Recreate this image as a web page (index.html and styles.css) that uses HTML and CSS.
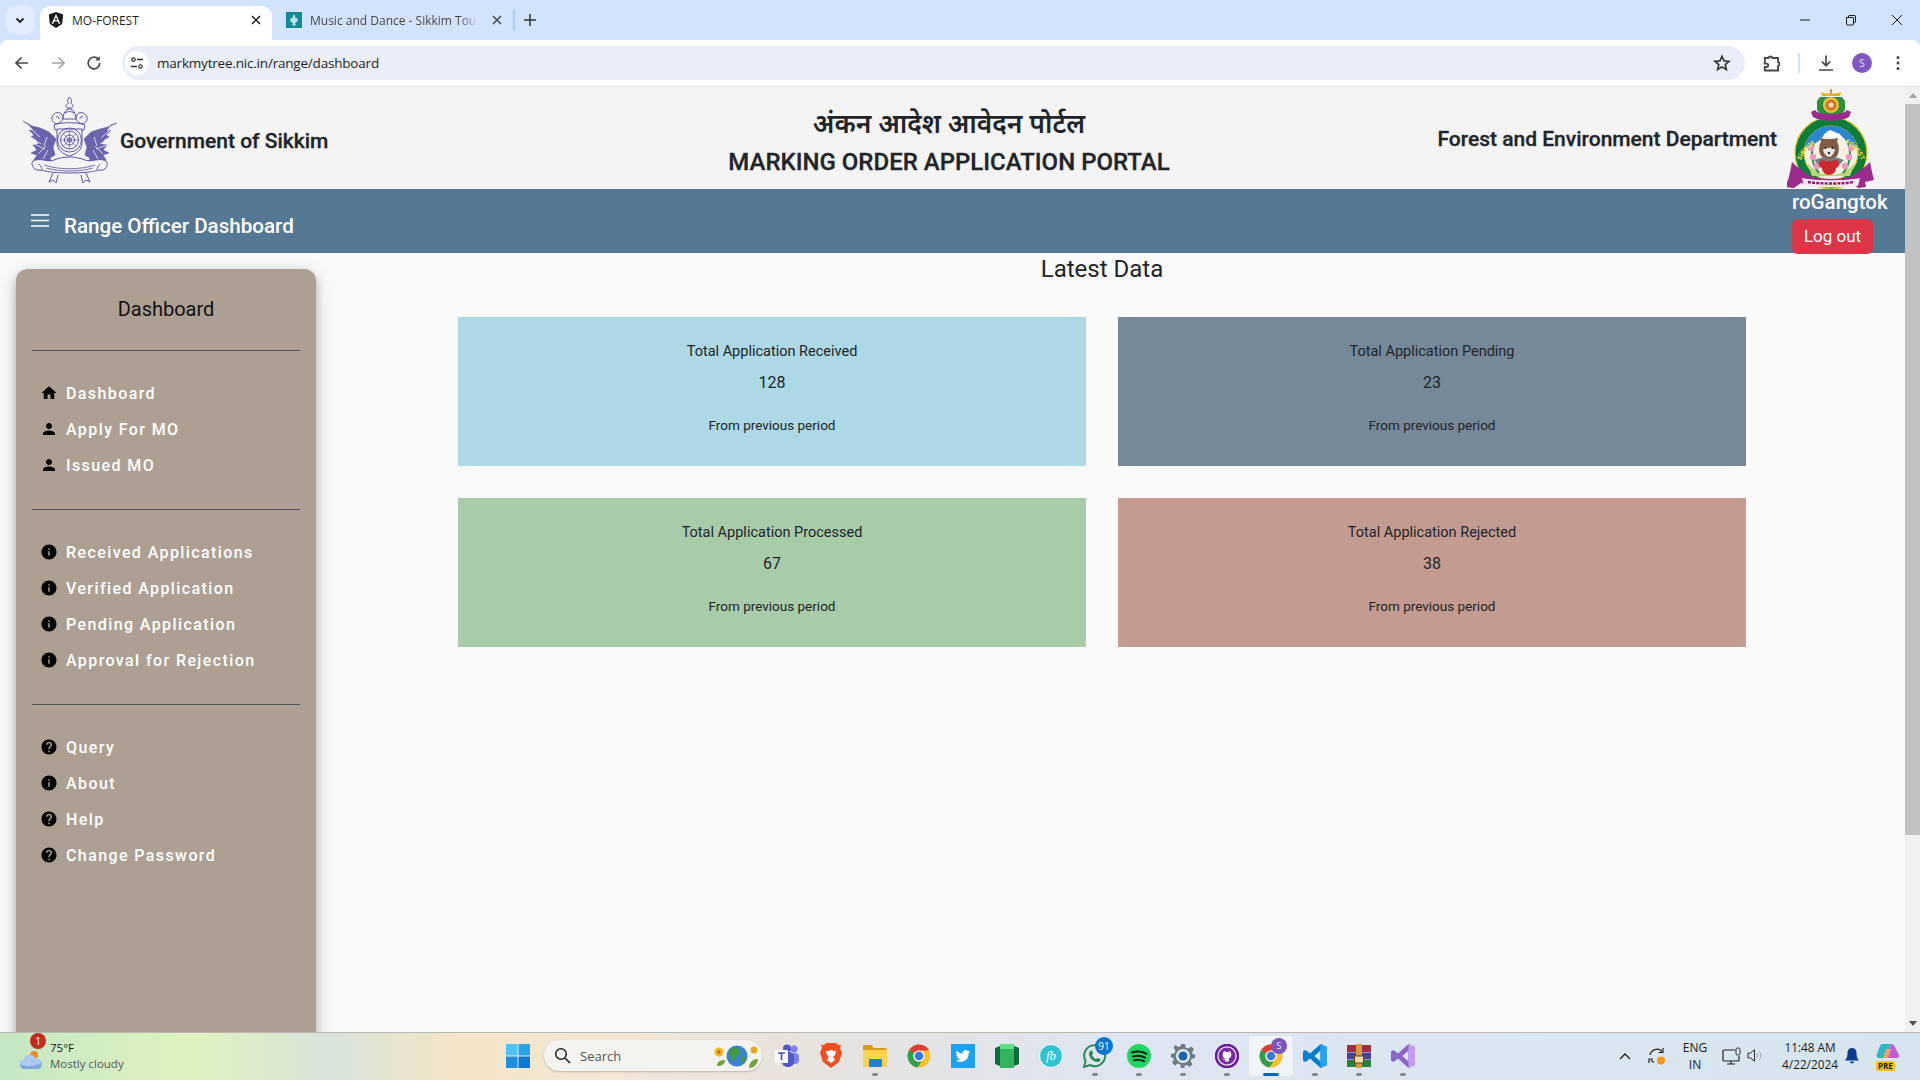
FILE: index.html
```html
<!DOCTYPE html>
<html lang="en">
<head>
<meta charset="utf-8">
<title>MO-FOREST</title>
<link rel="stylesheet" href="styles.css">
</head>
<body>
<svg class="defs" width="0" height="0" aria-hidden="true">
  <symbol id="i-home" viewBox="0 0 24 24"><path d="M10 20v-6h4v6h5v-8h3L12 3 2 12h3v8z"/></symbol>
  <symbol id="i-person" viewBox="0 0 24 24"><path d="M12 12c2.21 0 4-1.79 4-4s-1.79-4-4-4-4 1.79-4 4 1.79 4 4 4zm0 2c-2.67 0-8 1.34-8 4v2h16v-2c0-2.66-5.33-4-8-4z"/></symbol>
  <symbol id="i-info" viewBox="0 0 24 24"><path d="M12 2C6.48 2 2 6.48 2 12s4.48 10 10 10 10-4.48 10-10S17.52 2 12 2zm1 15h-2v-6h2v6zm0-8h-2V7h2v2z"/></symbol>
  <symbol id="i-help" viewBox="0 0 24 24"><path d="M12 2C6.48 2 2 6.48 2 12s4.48 10 10 10 10-4.48 10-10S17.52 2 12 2zm1 17h-2v-2h2v2zm2.07-7.75l-.9.92C13.45 12.9 13 13.5 13 15h-2v-.5c0-1.1.45-2.1 1.17-2.83l1.24-1.26c.37-.36.59-.86.59-1.41 0-1.1-.9-2-2-2s-2 .9-2 2H8c0-2.21 1.79-4 4-4s4 1.79 4 4c0 .88-.36 1.68-.93 2.25z"/></symbol>
  <symbol id="i-chrome" viewBox="0 0 24 24">
    <circle cx="12" cy="12" r="11.5" fill="#fbc02d"/>
    <path fill="#de3e33" d="M12 .5a11.5 11.5 0 0 1 10 5.9H12a5.6 5.6 0 0 0-5.3 3.7L2.4 5.7A11.5 11.5 0 0 1 12 .5z"/>
    <path fill="#2f9e4f" d="M2.4 5.700A11.500 11.500 0 0 0 10.500 23.400L15 16.900a5.600 5.600 0 0 1-8.300-6.800z"/>
    <circle cx="12" cy="12" r="5.600" fill="#fff"/><circle cx="12" cy="12" r="4.400" fill="#3b78e7"/>
  </symbol>
</svg>

<div class="tabstrip">
  <button class="tab-list"><svg width="12" height="12" viewBox="0 0 12 12"><path d="M2.500 4.500 6 8l3.500-3.500" fill="none" stroke="#1f1f1f" stroke-width="1.800"/></svg></button>
  <div class="tab tab-active">
    <svg class="favicon" viewBox="0 0 16 16"><path d="M8 0 .8 2.600l1.100 9.500L8 16l6.100-3.900 1.100-9.500z" fill="#1b1b1f"/><path d="M8 2 3.600 11.800h1.700l.9-2.200h3.600l.9 2.200h1.700zm-1.300 6.200L8 5.100l1.300 3.100z" fill="#fff"/></svg>
    <span class="tab-title">MO-FOREST</span>
    <svg class="tab-close" viewBox="0 0 16 16"><path d="m4 4 8 8m0-8-8 8" stroke="#1f1f1f" stroke-width="1.500"/></svg>
  </div>
  <div class="tab">
    <svg class="favicon" viewBox="0 0 16 16"><rect width="16" height="16" fill="#108a96"/><path d="M8 2.500c1.400 1 1.400 2.400.8 3.300 1.800-.2 3 .9 3 2.200 0 1.900-1.800 2.600-2.900 3.100l1 2.400H6.100l1-2.400C6 10.600 4.200 9.900 4.200 8c0-1.300 1.200-2.400 3-2.200-.6-.9-.6-2.300.8-3.300z" fill="#bfe6e4"/></svg>
    <span class="tab-title tab-fade">Music and Dance - Sikkim Tour</span>
    <svg class="tab-close" viewBox="0 0 16 16"><path d="m4 4 8 8m0-8-8 8" stroke="#474747" stroke-width="1.500"/></svg>
  </div>
  <span class="tab-sep"></span>
  <button class="tab-new"><svg width="14" height="14" viewBox="0 0 14 14"><path d="M7 1v12M1 7h12" stroke="#333" stroke-width="1.500"/></svg></button>
  <div class="win-controls">
    <span class="win-btn"><svg width="12" height="12" viewBox="0 0 12 12"><path d="M1 6h10" stroke="#1a1a1a"/></svg></span>
    <span class="win-btn"><svg width="12" height="12" viewBox="0 0 12 12"><path d="M1.500 3.500h6.500a.8.8 0 0 1 .5.5v6.500a.8.8 0 0 1-.5.5H2a.8.8 0 0 1-.5-.5zM3.500 3.500V2a.8.8 0 0 1 .5-.5h6a.8.8 0 0 1 .5.5v6a.8.8 0 0 1-.5.5H8.500" fill="none" stroke="#1a1a1a"/></svg></span>
    <span class="win-btn"><svg width="12" height="12" viewBox="0 0 12 12"><path d="m1 1 10 10M11 1 1 11" stroke="#1a1a1a"/></svg></span>
  </div>
</div>

<div class="toolbar">
  <span class="tool"><svg width="18" height="18" viewBox="0 0 18 18"><path d="M15 9H3.500M8.500 3.500 3 9l5.500 5.500" fill="none" stroke="#474747" stroke-width="1.700"/></svg></span>
  <span class="tool"><svg width="18" height="18" viewBox="0 0 18 18"><path d="M3 9h11.500M9.500 3.500 15 9l-5.500 5.500" fill="none" stroke="#a3a3a3" stroke-width="1.700"/></svg></span>
  <span class="tool"><svg width="18" height="18" viewBox="0 0 18 18"><path d="M14.800 9a5.800 5.800 0 1 1-1.700-4.100" fill="none" stroke="#474747" stroke-width="1.700"/><path d="M14.800 2v4.500h-4.500z" fill="#474747"/></svg></span>
  <div class="omnibox">
    <span class="site-icon"><svg width="14" height="14" viewBox="0 0 14 14"><circle cx="3.500" cy="3.500" r="1.700" fill="none" stroke="#333" stroke-width="1.200"/><path d="M7 3.500h6M1 10.500h6" stroke="#333" stroke-width="1.300"/><circle cx="10.500" cy="10.500" r="1.700" fill="none" stroke="#333" stroke-width="1.200"/></svg></span>
    <span class="url">markmytree.nic.in/range/dashboard</span>
    <svg class="star" width="18" height="18" viewBox="0 0 18 18"><path d="m9 2.300 2 4.600 5 .4-3.800 3.300 1.200 4.900L9 12.900l-4.400 2.600 1.200-4.900L2 7.300l5-.4z" fill="none" stroke="#333" stroke-width="1.600"/></svg>
  </div>
  <span class="tool"><svg width="20" height="20" viewBox="0 0 18 18"><path d="M2.500 4.500h3.300a1.900 1.900 0 0 1 3.600 0h5.100v3.800a1.800 1.800 0 0 1 0 3.400v4h-12v-3.100h1.600a1.500 1.500 0 0 0 0-3H2.500z" fill="none" stroke="#474747" stroke-width="1.700"/></svg></span>
  <span class="tool-sep"></span>
  <span class="tool"><svg width="18" height="18" viewBox="0 0 18 18"><path d="M9 1.500v10M4.800 7.500 9 11.700l4.200-4.200M2 16h14" fill="none" stroke="#474747" stroke-width="1.700"/></svg></span>
  <span class="tool"><span class="avatar">S</span></span>
  <span class="tool"><svg width="18" height="18" viewBox="0 0 18 18"><circle cx="9" cy="3.500" r="1.500" fill="#474747"/><circle cx="9" cy="9" r="1.500" fill="#474747"/><circle cx="9" cy="14.500" r="1.500" fill="#474747"/></svg></span>
</div>

<div class="viewport">
  <div class="app">
    <header class="brand">
      <div class="brand-left">
        <svg class="emblem-state" viewBox="0 0 95 86">
          <g fill="#514aa0" stroke="#514aa0" stroke-width=".5">
            <path d="m0 24 9 5 8 2 9 4 7 7-3 8 2 8-5 3 2 6-5-1-5 3-2-5-6-1 3-5-6-2 6-3-4-5 6-1-4-5-4-2 3-2-5-5 5 1-5-6z" fill-opacity=".85"/>
            <path d="m94 26-9 4-8 2-9 3-7 7 3 8-2 8 5 3-2 6 5-1 5 3 2-5 6-1-3-5 6-2-6-3 4-5-6-1 4-5 4-2-3-2 5-5-5 1 5-6z" fill-opacity=".85"/>
          </g>
          <g fill="none" stroke="#f4f4f4" stroke-width=".8">
            <path d="m7 31 10 9M6 39l12 8M11 47l11 5M15 57l8-8M20 62l5-9M24 40l-3 9M88 32l-10 9M89 40l-12 7M84 48l-11 4M80 57l-8-8M75 62l-5-9M71 40l3 9"/>
          </g>
          <g fill="none" stroke="#564ca3" stroke-width=".95">
            <path d="M46.500 0c-2.500 3-2.500 4.500-1 6-3 1.500-3 4-1 5h4c2-1 2-3.500-1-5 1.500-1.500 1.500-3-1-6z"/>
            <path d="M40 22c0-6 3-10 6.500-10s6.500 4 6.500 10z"/>
            <path d="M42 16c3-2 6-2 9 0"/>
            <path d="M29 20c2-5 8-6 10-2 2 3 0 7-3 8-3 2-8-1-7-6zM33 20c2-1 3 0 3 2M64 20c-2-5-8-6-10-2-2 3 0 7 3 8 3 2 8-1 7-6zM60 20c-2-1-3 0-3 2"/>
            <path d="M31 28c6-3 25-3 31 0l-1 5H32z"/>
            <path d="M34 32v14c0 7 6 11 12.500 13C53 57 59 53 59 46V32z" fill="#f4f4f4"/>
            <circle cx="46.500" cy="43" r="12"/><circle cx="46.500" cy="43" r="9"/><circle cx="46.500" cy="43" r="5"/><circle cx="46.500" cy="43" r="2"/>
            <path d="M46.500 34v18M37.500 43h18M40 36.500l13 13M53 36.500l-13 13" stroke-width=".6"/>
            <path d="M10 64c8-4 15 2 21-1 10-4 21-4 31 0 6 3 13-3 21 1 3 3 0 9-4 9-6 0-9 3-32 3s-26-3-32-3c-4 0-8-6-5-9z" fill="#f4f4f4"/>
            <path d="M21 68c16 5 35 5 51 0M23 71c15 4 33 4 47 0" stroke-width=".8"/>
            <path d="M16 67c2 2 3 4 3 6M77 67c-2 2-3 4-3 6"/>
            <path d="m30 76-4 9 4-2 3 3 2-8M63 76l4 9-4-2-3 3-2-8"/>
          </g>
        </svg>
        <span class="brand-state">Government of Sikkim</span>
      </div>
      <div class="brand-title">
        <div class="title-hi">अंकन आदेश आवेदन पोर्टल</div>
        <div class="title-en">MARKING ORDER APPLICATION PORTAL</div>
      </div>
      <div class="brand-right">
        <span class="brand-dept">Forest and Environment Department</span>
        <svg class="emblem-dept" viewBox="0 0 88 101">
          <path d="M44 0l1.500 3h-3zM34 4c3 2 17 2 20 0l-1 4H35z" fill="#e8b21f"/>
          <path d="M44 2v4" stroke="#b5372a"/>
          <path d="M33 9h22l3 4v9l-3 4-5 1-6 3-6-3-5-1-3-4v-9z" fill="#2c8f3e"/>
          <circle cx="44" cy="17" r="8" fill="#e9c13a"/><circle cx="44" cy="17" r="5.500" fill="#d9722a"/><circle cx="44" cy="17" r="2.500" fill="#f6e4a8"/>
          <circle cx="44" cy="65" r="36" fill="#0f7d3a" stroke="#e3c62c" stroke-width="1.200"/>
          <path d="M24 24l4-2 2 2c9 3 19 3 28 0l2-2 4 2-2 5c-9 5-27 5-36 0z" fill="#9a2a8c"/>
          <circle cx="44" cy="65" r="27" fill="#f4f1e3" stroke="#e3c62c"/>
          <path d="M17.400 60a27 27 0 0 1 53.200 0c-6-2-11-6-14-10l-5-5-5 3-6-5-6 7c-4 5-10 8-17.200 10z" fill="#2a86cf"/>
          <path d="M36 47l7-5 7 3 5 5-11-1z" fill="#fff"/>
          <path d="M20 74c11 17 37 17 48 0l-5 14H25z" fill="#b9d77a"/>
          <path d="M27 55c-4 10-2 22 5 30M61 55c4 10 2 22-5 30" fill="none" stroke="#3b8f47" stroke-width="2"/>
          <g fill="#e79ac3"><circle cx="24" cy="60" r="3.200"/><circle cx="26" cy="69" r="3.200"/><circle cx="30" cy="78" r="3.200"/><circle cx="64" cy="60" r="3.200"/><circle cx="62" cy="69" r="3.200"/><circle cx="58" cy="78" r="3.200"/></g>
          <path d="M33 66c-2-6 0-11 1-12l-1-4 5 1h8l5-1-1 4c1 1 3 6 1 12-1 3-5 5-9 5s-8-2-9-5z" fill="#7f5a46"/>
          <path d="M36 62c2-3 4-2 6-2s4-1 6 2c-1 4-4 7-6 7s-5-3-6-7z" fill="#ece5dc"/>
          <circle cx="38.500" cy="60" r="1.100" fill="#222"/><circle cx="45.500" cy="60" r="1.100" fill="#222"/><circle cx="42" cy="65" r="1.200" fill="#222"/>
          <path d="M27 72l10-3 5 2 6-2 9 3-5 5H32z" fill="#6f7f86"/>
          <circle cx="42" cy="80" r="7" fill="#d0282f"/><circle cx="36" cy="76" r="4" fill="#d0282f"/><circle cx="48" cy="76" r="4" fill="#d0282f"/>
          <path id="ring2" d="M13.500 74a32 32 0 0 1 61 0" fill="none"/>
          <text class="emblem-text"><textPath href="#ring2" startOffset="2%">SIKKIM</textPath></text>
          <text class="emblem-text"><textPath href="#ring2" startOffset="68%">FOREST</textPath></text>
          <path d="M1 92c2-7 3-13 4-18 3 3 6 6 10 8 5 6 13 9 29 9s24-3 29-9c4-2 7-5 10-8 1 5 2 11 4 18l-9 2 1 5-8 1-7-5c-8 3-42 3-50 0l-7 5-8-1 1-5z" fill="#9c2b8e"/>
          <path d="M15 90c12 3 46 3 58 0l-2 8c-12 2-42 2-54 0z" fill="#f7e7f4"/>
          <path d="M21 94c12 2 34 2 46 0" stroke="#7c1f70" stroke-width="2.400" stroke-dasharray="3 1.200" fill="none"/>
        </svg>
      </div>
    </header>

    <nav class="topbar">
      <button class="menu-btn"><svg width="18" height="14" viewBox="0 0 18 14"><path d="M0 1h18M0 6.500h18M0 12h18" stroke="#fff" stroke-width="1.600"/></svg></button>
      <span class="topbar-title">Range Officer Dashboard</span>
      <div class="user">
        <span class="user-name">roGangtok</span>
        <button class="logout">Log out</button>
      </div>
    </nav>

    <div class="body-row">
      <aside class="sidebar">
        <h3 class="side-head">Dashboard</h3>
        <hr class="side-rule">
        <ul class="side-group">
          <li class="side-item"><svg class="side-icon"><use href="#i-home"/></svg>Dashboard</li>
          <li class="side-item"><svg class="side-icon"><use href="#i-person"/></svg>Apply For MO</li>
          <li class="side-item"><svg class="side-icon"><use href="#i-person"/></svg>Issued MO</li>
        </ul>
        <hr class="side-rule">
        <ul class="side-group">
          <li class="side-item"><svg class="side-icon"><use href="#i-info"/></svg>Received Applications</li>
          <li class="side-item"><svg class="side-icon"><use href="#i-info"/></svg>Verified Application</li>
          <li class="side-item"><svg class="side-icon"><use href="#i-info"/></svg>Pending Application</li>
          <li class="side-item"><svg class="side-icon"><use href="#i-info"/></svg>Approval for Rejection</li>
        </ul>
        <hr class="side-rule">
        <ul class="side-group">
          <li class="side-item"><svg class="side-icon"><use href="#i-help"/></svg>Query</li>
          <li class="side-item"><svg class="side-icon"><use href="#i-info"/></svg>About</li>
          <li class="side-item"><svg class="side-icon"><use href="#i-help"/></svg>Help</li>
          <li class="side-item"><svg class="side-icon"><use href="#i-help"/></svg>Change Password</li>
        </ul>
      </aside>
      <main class="content">
        <h2 class="content-head">Latest Data</h2>
        <div class="cards">
          <section class="card card-blue"><div class="card-label">Total Application Received</div><div class="card-num">128</div><div class="card-foot">From previous period</div></section>
          <section class="card card-slate"><div class="card-label">Total Application Pending</div><div class="card-num">23</div><div class="card-foot">From previous period</div></section>
          <section class="card card-green"><div class="card-label">Total Application Processed</div><div class="card-num">67</div><div class="card-foot">From previous period</div></section>
          <section class="card card-rose"><div class="card-label">Total Application Rejected</div><div class="card-num">38</div><div class="card-foot">From previous period</div></section>
        </div>
      </main>
    </div>
  </div>
  <div class="scrollbar">
    <span class="sb-arrow"><i class="tri-up"></i></span>
    <span class="sb-thumb"></span>
    <span class="sb-arrow sb-end"><i class="tri-down"></i></span>
  </div>
</div>

<footer class="taskbar">
  <div class="tb-weather">
    <span class="wx-icon">
      <svg width="26" height="22" viewBox="0 0 26 22"><circle cx="16" cy="6" r="4" fill="#f08a24"/><path d="M6 20a4.500 4.500 0 0 1-.5-9 6.500 6.500 0 0 1 12.300-1.500A5.300 5.300 0 0 1 20 20z" fill="#a9c9ee"/><path d="M2 15c6 3 14 3 21-1l1 2c-1 3-3 4-4 4H6c-2 0-4-2-4-5z" fill="#7fa9dd"/></svg>
      <span class="wx-badge">1</span>
    </span>
    <span class="wx-text"><span class="wx-temp">75°F</span><span class="wx-desc">Mostly cloudy</span></span>
  </div>
  <span class="tb-slot"><svg width="24" height="24" viewBox="0 0 24 24"><path d="M0 0h11.500v11.500H0z" fill="#4fc3f7"/><path d="M12.500 0H24v11.500H12.500z" fill="#29a3e8"/><path d="M0 12.500h11.500V24H0z" fill="#1b8fde"/><path d="M12.500 12.500H24V24H12.500z" fill="#0b78d1"/></svg></span>
  <div class="tb-search">
    <svg width="17" height="17" viewBox="0 0 17 17"><circle cx="7" cy="7" r="5.300" fill="none" stroke="#222" stroke-width="1.500"/><path d="m11 11 5 5" stroke="#222" stroke-width="1.700"/></svg>
    <span class="tb-search-text">Search</span>
    <svg class="tb-globe" width="46" height="26" viewBox="0 0 46 26"><circle cx="23" cy="13" r="10.500" fill="#3b82d0"/><path d="M18 5c4-1 8 1 8 4s-3 3-4 6-4 4-5 0-3-8 1-10zM28 14c3-1 4 1 3 4s-4 3-4 0z" fill="#3e9c3e"/><circle cx="5" cy="9" r="4.500" fill="#f1b91f"/><circle cx="5" cy="9" r="1.700" fill="#c96a10"/><path d="M3 23c0-4 3-6 8-6 0 4-3 6-8 6zM44 16c0 5-4 9-9 9 0-5 3-9 9-9z" fill="#6da63a"/><circle cx="40" cy="7" r="3.500" fill="#e9a81f"/></svg>
  </div>
  <span class="tb-slot"><svg width="26" height="24" viewBox="0 0 26 24"><circle cx="20" cy="5" r="3.500" fill="#7b83eb"/><rect x="14" y="9" width="11" height="11" rx="4" fill="#7b83eb"/><circle cx="13" cy="4.500" r="4" fill="#5059c9"/><rect x="8" y="8" width="12" height="15" rx="5" fill="#5059c9"/><rect x="1" y="6" width="13" height="13" rx="1" fill="#fff"/><path d="M4 9h7M7.500 9v7" stroke="#464eb8" stroke-width="1.700"/></svg></span>
  <span class="tb-slot"><svg width="22" height="25" viewBox="0 0 22 25"><path d="m6 0h10l2 2 3-.5L20 5l2 5-3 9-8 6-8-6-3-9 2-5L1 1.500 4 2z" fill="#f04e23"/><path d="M6 8c2 0 3 0 5-1 2 1 3 1 5 1l-1 4-2 2 2 3-4 3-4-3 2-3-2-2z" fill="#fff"/></svg></span>
  <span class="tb-slot tb-open"><svg width="24" height="22" viewBox="0 0 24 22"><path d="M0 1.500A1.500 1.500 0 0 1 1.500 0h7l2 3H22a2 2 0 0 1 2 2v15a2 2 0 0 1-2 2H2a2 2 0 0 1-2-2z" fill="#d99c1c"/><path d="M0 5h24v15a2 2 0 0 1-2 2H2a2 2 0 0 1-2-2z" fill="#fcd24f"/><rect x="6" y="14" width="13" height="8" rx="1" fill="#1f7fd0"/></svg></span>
  <span class="tb-slot"><svg class="tb-ic" viewBox="0 0 24 24"><use href="#i-chrome"/></svg></span>
  <span class="tb-slot"><svg width="24" height="24" viewBox="0 0 24 24"><rect width="24" height="24" fill="#1da1f2"/><path d="M19 7.500c-.5.300-1.100.4-1.700.5.600-.4 1-.9 1.300-1.600-.6.300-1.200.6-1.900.7a3 3 0 0 0-5.100 2.700A8.400 8.400 0 0 1 5.600 6.700a3 3 0 0 0 .9 3.900c-.5 0-.9-.1-1.300-.4 0 1.500 1 2.700 2.400 3a3 3 0 0 1-1.300 0c.4 1.200 1.500 2 2.800 2.100A6 6 0 0 1 4.700 16.500a8.400 8.400 0 0 0 13-7.500c.5-.4 1-.9 1.300-1.500z" fill="#fff"/></svg></span>
  <span class="tb-slot"><svg width="24" height="24" viewBox="0 0 24 24"><path d="M0 4 5 2v20l-5-2z" fill="#0f6b3a"/><path d="M24 4l-5-2v20l5-2z" fill="#0f6b3a"/><rect x="5" y="0" width="14" height="24" fill="#33b35b"/><rect x="5" y="0" width="14" height="5" fill="#5ee07f"/></svg></span>
  <span class="tb-slot"><span class="fb-badge">fb</span></span>
  <span class="tb-slot tb-open"><svg width="24" height="24" viewBox="0 0 24 24"><path d="M1 23l1.600-6A10.500 10.500 0 1 1 6.800 21z" fill="none" stroke="#2b8a5a" stroke-width="2"/><path d="M8.500 6.500c1 0 1.500 2.500 1.500 3s-1 1-1 1.500c1 2 2 3 4 4 .5 0 1-1 1.500-1s3 1 3 1.500c0 2-2 2.500-3 2.500-4 0-8.500-4-8.500-8.500 0-1 1-3 2.500-3z" fill="#2b8a5a"/></svg><span class="tb-count">91</span></span>
  <span class="tb-slot tb-open"><svg width="24" height="24" viewBox="0 0 24 24"><circle cx="12" cy="12" r="12" fill="#1ed760"/><path d="M5 8.500c5-1.500 10-1 14.500 1.300M6 12.500c4-1.200 8.500-.8 12 1.200M7 16.200c3.500-1 7-.6 10 1" fill="none" stroke="#0c1f12" stroke-width="2" stroke-linecap="round"/></svg></span>
  <span class="tb-slot tb-open"><svg width="24" height="24" viewBox="0 0 24 24"><path d="M10 0h4l.7 3.400 2.500 1 3-1.900 2.800 2.800-1.900 3 1 2.500L24 10v4l-3.400.7-1 2.500 1.900 3-2.800 2.800-3-1.900-2.500 1L14 24h-4l-.7-3.400-2.500-1-3 1.900-2.800-2.800 1.900-3-1-2.500L0 14v-4l3.400-.7 1-2.500-1.900-3L4.300 1l3 1.900 2.500-1z" fill="#6d7b87"/><circle cx="12" cy="12" r="7" fill="#e6ebf0"/><circle cx="12" cy="12" r="4.500" fill="#1566b0"/></svg></span>
  <span class="tb-slot tb-open"><svg width="24" height="24" viewBox="0 0 24 24"><circle cx="12" cy="12" r="11" fill="#f3e9f7" stroke="#6a1b9a" stroke-width="2.500"/><circle cx="12" cy="12" r="8.500" fill="#7b2aa0"/><path d="M8 9l1-2 2 1h2l2-1 1 2c1 3-.5 5-2.500 5.500.5.500.5 1 .5 3h-4v-1.500c-1.500 0-2-.5-2.500-1.500 1 .5 1.500.5 2.500.5v-.5C8.500 14 7 12 8 9z" fill="#fff"/></svg></span>
  <span class="tb-slot tb-active"><svg class="tb-ic" viewBox="0 0 24 24"><use href="#i-chrome"/></svg><span class="tb-profile">S</span></span>
  <span class="tb-slot tb-open"><svg width="24" height="24" viewBox="0 0 24 24"><path d="M17.500 0 24 3v18l-6.500 3L7 14.500 2.500 18 0 16.500V7.500L2.500 6 7 9.500zM17.500 6.500 11.500 12l6 5.500z" fill="#0a7fcb"/><path d="M17.500 0 24 3v18l-6.500 3z" fill="#25a5ef"/></svg></span>
  <span class="tb-slot tb-open"><svg width="24" height="24" viewBox="0 0 24 24"><rect x="0" y="1" width="24" height="7" fill="#a02c49"/><rect x="0" y="8.500" width="24" height="7" fill="#4a3f9c"/><rect x="0" y="16" width="24" height="7" fill="#2b7f3e"/><rect x="9" y="0" width="6" height="24" fill="#d99a3a"/><rect x="7.500" y="12" width="9" height="7" fill="#f2dca5" stroke="#6b4212"/></svg></span>
  <span class="tb-slot tb-open"><svg width="24" height="24" viewBox="0 0 24 24"><path d="M17.500 0 24 3v18l-6.500 3L7 14.500 2.500 18 0 16.500V7.500L2.500 6 7 9.500zM17.500 6.500 11.500 12l6 5.500z" fill="#8c63c6"/><path d="M17.500 0 24 3v18l-6.500 3z" fill="#c29ef0"/></svg></span>

  <div class="tray">
    <span class="tray-chev"><svg width="12" height="8" viewBox="0 0 12 8"><path d="m1 7 5-5 5 5" fill="none" stroke="#222" stroke-width="1.300"/></svg></span>
    <span class="tray-sync"><svg width="18" height="18" viewBox="0 0 18 18"><path d="M2 8a7 7 0 0 1 12-3.500M3 13a7 7 0 0 0 3 2.400" fill="none" stroke="#222" stroke-width="1.200"/><path d="M15 1v4.500h-4.500M1 16v-4h4" fill="none" stroke="#222" stroke-width="1.200"/><circle cx="13" cy="13.500" r="4" fill="#f59a1c"/></svg></span>
    <span class="tray-lang"><span>ENG</span><span>IN</span></span>
    <span class="tray-net"><svg width="20" height="18" viewBox="0 0 20 18"><path d="M13 3H2a1 1 0 0 0-1 1v9a1 1 0 0 0 1 1h14a1 1 0 0 0 1-1V9M5 17h8M9 14v3" fill="none" stroke="#222" stroke-width="1.200"/><rect x="14" y="1" width="4" height="7" rx="1.500" fill="none" stroke="#222"/></svg></span>
    <span class="tray-vol"><svg width="17" height="15" viewBox="0 0 17 15"><path d="M1 5h2.500L8 1.500v12L3.500 10H1z" fill="none" stroke="#222"/><path d="M10.500 5a3.500 3.500 0 0 1 0 5M13 3a7 7 0 0 1 0 9" fill="none" stroke="#9aa3aa"/></svg></span>
    <span class="tray-clock"><span>11:48 AM</span><span>4/22/2024</span></span>
    <span class="tray-bell"><svg width="14" height="16" viewBox="0 0 14 16"><path d="M7 0a4.500 4.500 0 0 1 4.500 4.500c0 4 .5 5.500 2.500 8H0c2-2.500 2.500-4 2.500-8A4.500 4.500 0 0 1 7 0zM5 13.500h4a2 2 0 0 1-4 0z" fill="#0b3d91"/></svg></span>
    <span class="tray-copilot">
      <svg width="24" height="20" viewBox="0 0 24 20"><path d="M6 1h9l-4 14H3c-2 0-3-2-2-4L4 3a3 3 0 0 1 2-2z" fill="#2fb6c9"/><path d="M15 1c2 0 3 1 4 3l4 8c1 2-1 3-3 3h-9z" fill="#c45bd6"/><path d="M7 15l3-9h5l-3 9z" fill="#f0a35c"/></svg>
      <span class="pre">PRE</span>
    </span>
  </div>
</footer>
</body>
</html>
```
FILE: styles.css
```css
* { box-sizing: border-box; }
html, body { margin: 0; height: 100%; overflow: hidden; }
body { display: flex; flex-direction: column; width: 1920px; height: 1080px; font-family: Roboto, "Noto Sans", sans-serif; background: #d3e3fd; }
.defs { position: absolute; }
button { border: 0; padding: 0; background: none; font: inherit; }
h2, h3, ul { margin: 0; padding: 0; font-weight: 400; }
ul { list-style: none; }

.tabstrip { height: 40px; flex: none; display: flex; align-items: flex-end; padding-left: 6px; font-family: "Open Sans", "Noto Sans", sans-serif; font-size: 12px; }
.tab-list { width: 28px; height: 28px; margin-bottom: 6px; border-radius: 8px; background: #e3ecfc; display: flex; align-items: center; justify-content: center; }
.tab { width: 232px; height: 34px; margin-left: 6px; padding: 0 8px 6px; display: flex; align-items: center; gap: 8px; color: #474747; }
.tab-active { background: #fff; border-radius: 10px 10px 0 0; color: #1f1f1f; }
.favicon { width: 16px; height: 16px; flex: none; }
.tab-title { flex: 1; white-space: nowrap; }
.tab-fade { -webkit-mask-image: linear-gradient(90deg, #000 150px, transparent 168px); mask-image: linear-gradient(90deg, #000 150px, transparent 168px); }
.tab-close { width: 16px; height: 16px; flex: none; }
.tab-sep { width: 2px; height: 20px; margin: 0 1px 10px 3px; background: #a8c7fa; }
.tab-new { width: 28px; height: 28px; margin-bottom: 6px; display: flex; align-items: center; justify-content: center; }
.win-controls { margin-left: auto; height: 40px; display: flex; }
.win-btn { width: 46px; display: flex; align-items: center; justify-content: center; }

.toolbar { height: 47px; flex: none; display: flex; align-items: center; padding: 0 4px 1px; background: #fff; border-bottom: 1px solid #e3e3e3; border-radius: 8px 8px 0 0; }
.tool { width: 36px; height: 36px; display: flex; align-items: center; justify-content: center; flex: none; }
.tool-sep { width: 18px; height: 20px; flex: none; background: linear-gradient(#d3e3fd, #d3e3fd) center / 2px 100% no-repeat; }
.omnibox { flex: 1; height: 34px; margin: 0 9px 0 10px; padding: 0 14px 0 3px; border-radius: 17px; background: #e9eef8; display: flex; align-items: center; }
.site-icon { width: 24px; height: 24px; border-radius: 50%; background: #fff; display: flex; align-items: center; justify-content: center; }
.url { margin-left: 8px; font: 13.500px "Open Sans", "Noto Sans", sans-serif; letter-spacing: -.2px; color: #1f1f1f; }
.star { margin-left: auto; }
.avatar { width: 20px; height: 20px; border-radius: 50%; background: #7e57c2; color: #e9e2f7; font: 10px/20px "Open Sans", sans-serif; text-align: center; }

.viewport { flex: 1; min-height: 0; display: flex; }
.app { flex: 1; min-width: 0; display: flex; flex-direction: column; background: #fafafa; overflow: hidden; }
.scrollbar { width: 15px; flex: none; display: flex; flex-direction: column; background: #f1f1f1; }
.sb-arrow { height: 17px; display: flex; align-items: center; justify-content: center; flex: none; }
.sb-end { margin-top: auto; }
.sb-thumb { height: 731px; background: #c1c1c1; flex: none; }
.tri-up, .tri-down { width: 0; height: 0; border-left: 4.500px solid transparent; border-right: 4.500px solid transparent; }
.tri-up { border-bottom: 5px solid #a3a3a3; }
.tri-down { border-top: 5px solid #505050; }

.brand { height: 102px; flex: none; display: grid; grid-template-columns: 500px 898px 1fr; align-items: center; background: #f4f4f4; color: #212529; }
.brand-left { display: flex; align-items: center; padding-left: 23px; }
.emblem-state { width: 95px; height: 86px; flex: none; margin-top: 4px; }
.brand-state { margin: 6px 0 0 2px; font-size: 21px; font-weight: 500; white-space: nowrap; -webkit-text-stroke: .3px #212529; }
.brand-title { text-align: center; font-weight: 500; padding-top: 7px; }
.title-hi { font-size: 26.400px; line-height: 36px; margin-top: -2px; font-family: "Noto Sans", Roboto, sans-serif; font-weight: 600; }
.title-en { font-size: 24px; line-height: 30px; margin-top: 6px; -webkit-text-stroke: .3px #212529; }
.brand-right { display: flex; align-items: flex-start; justify-content: flex-end; padding-right: 30px; height: 102px; }
.brand-dept { font-size: 21px; font-weight: 500; line-height: 24px; margin: 40px 10px 0 0; white-space: nowrap; -webkit-text-stroke: .3px #212529; }
.emblem-dept { width: 88px; height: 101px; flex: none; margin-top: 1px; }
.emblem-text { font: 700 6.500px Roboto, sans-serif; fill: #f4e04d; }

.topbar { height: 64px; flex: none; display: flex; align-items: flex-start; background: #557894; color: #fff; }
.menu-btn { margin: 25px 0 0 31px; width: 18px; height: 14px; display: block; line-height: 0; }
.topbar-title { margin: 25px 0 0 15px; font-size: 20.600px; line-height: 24px; font-weight: 500; }
.user { margin-left: auto; margin-right: 17px; width: 96px; display: flex; flex-direction: column; align-items: flex-start; }
.user-name { font-size: 20.500px; font-weight: 500; line-height: 24px; margin-top: 1px; }
.logout { width: 81px; height: 35px; margin: 5px 0 0; padding-bottom: 2px; border-radius: 6px; background: #dc3545; color: #fff; font: 400 17px Roboto, sans-serif; }

.body-row { flex: 1; min-height: 0; display: flex; align-items: flex-start; }
.sidebar { width: 300px; height: 800px; flex: none; margin: 16px 0 0 16px; padding: 28px 16px 0; border-radius: 12px; background: #ad9f92; box-shadow: 0 4px 8px rgba(0,0,0,.2), 0 6px 20px rgba(0,0,0,.19); }
.side-head { font-size: 20px; line-height: 24px; text-align: center; color: #111; margin-bottom: 29px; }
.side-rule { margin: 0; border: 0; height: 1px; background: #555260; }
.side-group { padding: 24px 0 26px; }
.side-item { height: 36px; display: flex; align-items: center; padding-left: 8px; color: #fff; font-size: 16px; font-weight: 500; letter-spacing: 1.400px; }
.side-icon { width: 18px; height: 18px; margin-right: 8px; fill: #000; flex: none; }

.content { flex: 1; min-width: 0; margin-right: 17px; display: flex; flex-direction: column; align-items: center; }
.content-head { font-size: 24px; line-height: 32px; color: #212529; }
.cards { margin-top: 32px; display: grid; grid-template-columns: 628px 628px; gap: 32px; }
.card { padding: 25px 0 32px; text-align: center; color: #212529; }
.card-label { font-size: 14.500px; line-height: 20px; }
.card-num { font-size: 16px; line-height: 24px; margin-top: 9px; }
.card-foot { font-size: 13.500px; line-height: 18px; margin-top: 21px; }
.card-blue { background: #add8e6; }
.card-slate { background: #778899; }
.card-green { background: #a8cca9; }
.card-rose { background: #c49b90; }

.taskbar { height: 48px; flex: none; display: flex; align-items: center; padding-bottom: 2px; border-top: 1px solid #b9b9b4; font-family: "Open Sans", "Noto Sans", sans-serif; color: #1c1c1c; background: linear-gradient(90deg, #c5e6c4 0, #dff3bf 10%, #d7e3da 17%, #f5e5c8 24%, #f2e6d6 32%, #e7e3de 42%, #dfe6f1 58%, #dbe6f1 75%, #d6e5ee 100%); }
.tb-weather { width: 496px; flex: none; padding-left: 18px; display: flex; align-items: center; gap: 6px; }
.wx-icon { position: relative; width: 26px; height: 22px; margin-top: 8px; }
.wx-badge { position: absolute; left: 12px; top: -16px; width: 16px; height: 16px; border-radius: 50%; background: #c42b1c; color: #fff; font-size: 10px; line-height: 16px; text-align: center; }
.wx-text { display: flex; flex-direction: column; font-size: 11.500px; line-height: 16px; }
.wx-desc { color: #555; }
.tb-slot { width: 44px; height: 40px; flex: none; position: relative; display: flex; align-items: center; justify-content: center; border-radius: 4px; }
.tb-ic { width: 24px; height: 24px; }
.tb-open::after, .tb-active::after { content: ""; position: absolute; left: 50%; bottom: 0; height: 3px; border-radius: 2px; }
.tb-open::after { width: 6px; margin-left: -3px; background: #85888c; }
.tb-active { background: rgba(255,255,255,.55); }
.tb-active::after { width: 16px; margin-left: -8px; background: #0067c0; }
.tb-search { width: 218px; height: 31px; flex: none; margin: 0 3px 0 4px; padding: 0 2px 0 10px; border-radius: 16px; background: #f5f3ef; box-shadow: 0 1px 2px rgba(0,0,0,.2); display: flex; align-items: center; gap: 9px; font-size: 13px; color: #555; }
.tb-globe { margin-left: auto; }
.fb-badge { width: 24px; height: 24px; border-radius: 50%; background: #2ec4d6; border: 1px solid #fff; color: #fff; font: italic 13px/22px "Liberation Serif", serif; text-align: center; }
.tb-count { position: absolute; top: 1px; right: 4px; min-width: 18px; height: 18px; border-radius: 9px; background: #0a75d1; color: #fff; font-size: 10px; line-height: 18px; text-align: center; }
.tb-profile { position: absolute; top: 2px; right: 6px; width: 16px; height: 16px; border-radius: 50%; background: #7a55bd; color: #efe9fb; font-size: 9px; line-height: 16px; text-align: center; }

.tray { margin-left: auto; display: flex; align-items: center; font-size: 12px; }
.tray-chev, .tray-sync { width: 32px; display: flex; justify-content: center; }
.tray-lang { width: 44px; display: flex; flex-direction: column; align-items: center; line-height: 17px; }
.tray-net { width: 30px; display: flex; justify-content: center; }
.tray-vol { width: 16px; display: flex; justify-content: center; }
.tray-clock { width: 60px; margin: 0 1px 0 17px; display: flex; flex-direction: column; align-items: center; line-height: 17px; white-space: nowrap; font-size: 11.800px; }
.tray-bell { width: 22px; display: flex; justify-content: center; }
.tray-copilot { position: relative; width: 40px; height: 30px; margin: 0 12px 0 5px; display: flex; justify-content: center; padding-top: 2px; }
.pre { position: absolute; left: 8px; bottom: 0; padding: 0 2px; border-radius: 2px; background: #f4bf1f; color: #222; font: 700 8px/10px "Open Sans", sans-serif; }
```
